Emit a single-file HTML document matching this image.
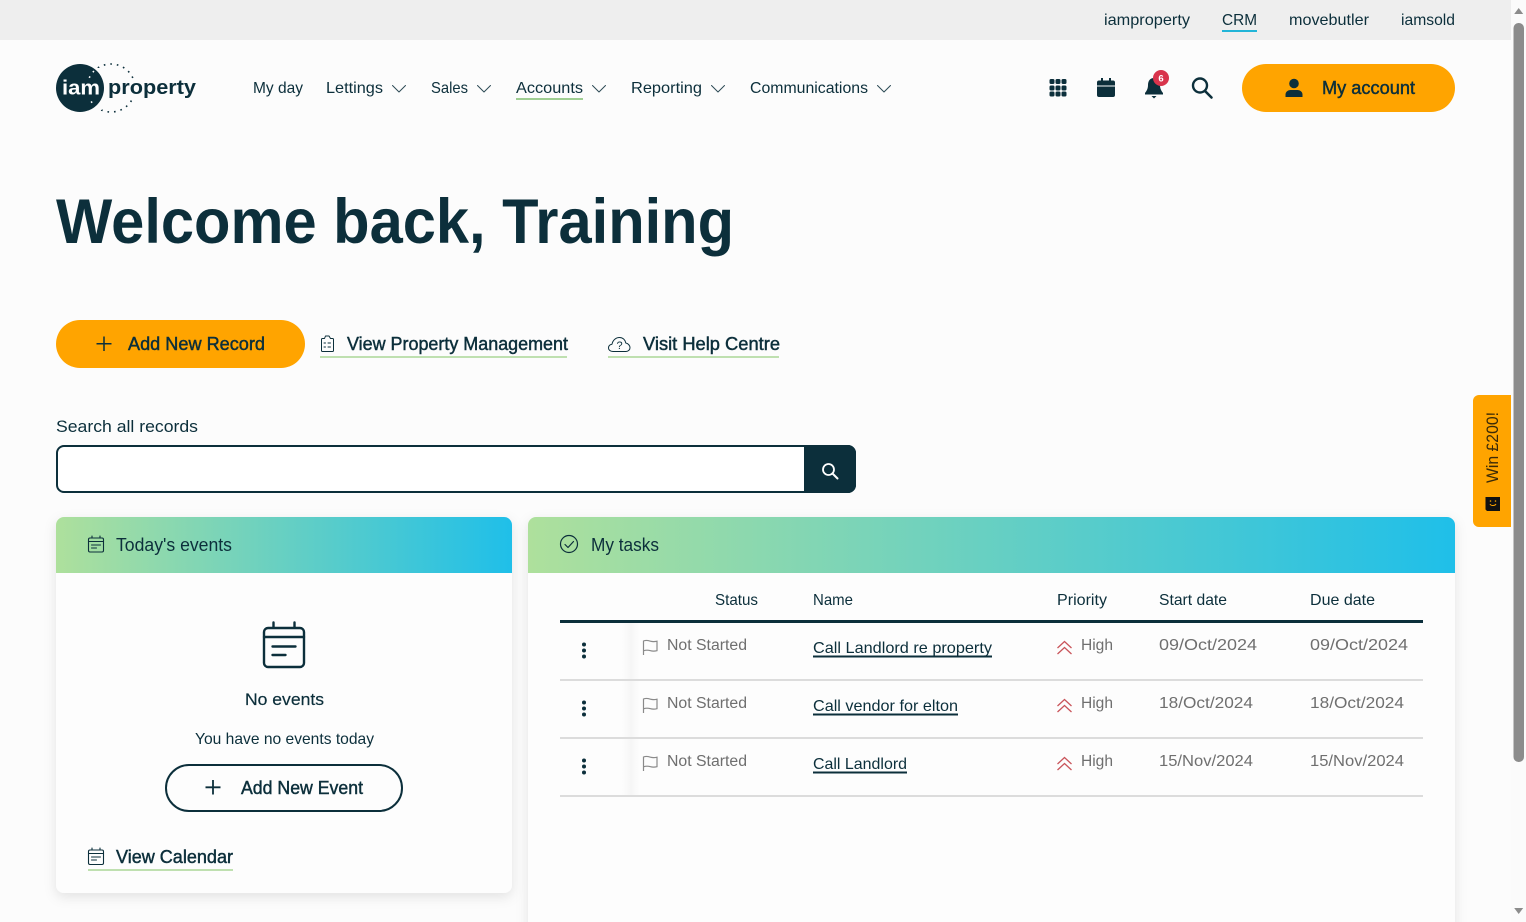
<!DOCTYPE html>
<html lang="en"><head><meta charset="utf-8"><title>iam property CRM</title>
<style>
html,body{margin:0;padding:0;width:1526px;height:922px;overflow:hidden;background:#fcfcfc}
svg{display:block;position:absolute;left:0;top:0}
text{font-family:"Liberation Sans",sans-serif;fill:#0c2f3b;font-size:16px}
.m{stroke:#0c2f3b;stroke-width:.45px}
.g{fill:#6f6f6f;font-size:15.5px}
.i{fill:none;stroke:#0c2f3b;stroke-width:1.3;stroke-linecap:round;stroke-linejoin:round}
.c{fill:none;stroke:#2c4a55;stroke-width:1;stroke-linecap:round;stroke-linejoin:round}
</style></head><body>
<svg width="1526" height="922" viewBox="0 0 1526 922" xmlns="http://www.w3.org/2000/svg">
<defs>
<linearGradient id="gr" x1="0" x2="1" y1="0" y2="0"><stop offset="0" stop-color="#aee09c"/><stop offset="1" stop-color="#1fbfe9"/></linearGradient>
<linearGradient id="fd" x1="0" x2="1" y1="0" y2="0"><stop offset="0" stop-color="#f7f7f7" stop-opacity="0"/><stop offset=".5" stop-color="#f6f6f6"/><stop offset="1" stop-color="#f7f7f7" stop-opacity="0"/></linearGradient>
<filter id="sh" x="-10%" y="-10%" width="120%" height="120%"><feDropShadow dx="0" dy="4" stdDeviation="6" flood-color="#000" flood-opacity=".1"/></filter>
<clipPath id="in"><path d="M85 68h17v12H85zM85 98h17v12H85z"/></clipPath>
<clipPath id="out"><path d="M104 60h40v20h-40zM104 97h40v20h-40zM92 60h14v8H92zM92 108h14v8H92z"/></clipPath>
</defs>
<!-- top bar -->
<rect x="0" y="0" width="1511" height="40" fill="#eeeeee"/>
<text x="1104" y="25" textLength="86" lengthAdjust="spacingAndGlyphs">iamproperty</text>
<text x="1222" y="25" textLength="35" lengthAdjust="spacingAndGlyphs">CRM</text>
<rect x="1222" y="30" width="35" height="2" fill="#22b5d8"/>
<text x="1289" y="25" textLength="80" lengthAdjust="spacingAndGlyphs">movebutler</text>
<text x="1401" y="25" textLength="54" lengthAdjust="spacingAndGlyphs">iamsold</text>
<!-- logo -->
<circle cx="111" cy="88" r="24" fill="none" stroke="#0c2f3b" stroke-width="1.600" stroke-dasharray="1.600 5" clip-path="url(#out)"/>
<circle cx="80" cy="88" r="24" fill="#0c2f3b"/>
<circle cx="111" cy="88" r="24" fill="none" stroke="#fff" stroke-width="1.600" stroke-dasharray="1.600 5" clip-path="url(#in)"/>
<text x="62" y="94.500" textLength="38" lengthAdjust="spacingAndGlyphs" font-weight="700" style="fill:#fff;font-size:20px">iam</text>
<text x="108" y="94" textLength="88" lengthAdjust="spacingAndGlyphs" font-weight="700" style="font-size:20px">property</text>
<!-- nav -->
<text x="253" y="93" textLength="50" lengthAdjust="spacingAndGlyphs">My day</text>
<text x="326" y="93" textLength="57" lengthAdjust="spacingAndGlyphs">Lettings</text>
<path class="c" d="M392.500 85.500l6.500 6.500 6.500-6.500"/>
<text x="431" y="93" textLength="37" lengthAdjust="spacingAndGlyphs">Sales</text>
<path class="c" d="M477.500 85.500l6.500 6.500 6.500-6.500"/>
<text x="516" y="93" textLength="67" lengthAdjust="spacingAndGlyphs">Accounts</text>
<rect x="516" y="98" width="67" height="2" fill="#9fce92"/>
<path class="c" d="M592.500 85.500l6.500 6.500 6.500-6.500"/>
<text x="631" y="93" textLength="71" lengthAdjust="spacingAndGlyphs">Reporting</text>
<path class="c" d="M711.500 85.500l6.500 6.500 6.500-6.500"/>
<text x="750" y="93" textLength="118" lengthAdjust="spacingAndGlyphs">Communications</text>
<path class="c" d="M877.500 85.500l6.500 6.500 6.500-6.500"/>
<!-- header icons -->
<g fill="#0c2f3b">
<rect x="1049.500" y="79" width="5" height="5" rx="1.500"/><rect x="1055.500" y="79" width="5" height="5" rx="1.500"/><rect x="1061.500" y="79" width="5" height="5" rx="1.500"/>
<rect x="1049.500" y="85.500" width="5" height="5" rx="1.500"/><rect x="1055.500" y="85.500" width="5" height="5" rx="1.500"/><rect x="1061.500" y="85.500" width="5" height="5" rx="1.500"/>
<rect x="1049.500" y="91.500" width="5" height="5" rx="1.500"/><rect x="1055.500" y="91.500" width="5" height="5" rx="1.500"/><rect x="1061.500" y="91.500" width="5" height="5" rx="1.500"/>
<path d="M1097 82.500a2 2 0 0 1 2-2h2v-2.500h2v2.500h6v-2.500h2v2.500h2a2 2 0 0 1 2 2v3h-18zM1097 86.500h18v8.500a2 2 0 0 1-2 2h-14a2 2 0 0 1-2-2z"/>
<path d="M1154 78c-4 0-6 3-6 7 0 4-1.500 6-3 8v1.500h18v-1.500c-1.500-2-3-4-3-8 0-4-2-7-6-7zM1151.500 96h5l-2.500 2.500z"/>
</g>
<circle cx="1161" cy="78" r="8" fill="#d8344c"/>
<text x="1161" y="81.500" text-anchor="middle" font-weight="700" style="fill:#fff;font-size:9.500px">6</text>
<circle cx="1200" cy="85.500" r="7" fill="none" stroke="#0c2f3b" stroke-width="2.400"/>
<path d="M1205 91l6.500 6.500" stroke="#0c2f3b" stroke-width="2.600" stroke-linecap="round"/>
<!-- my account -->
<rect x="1242" y="64" width="213" height="48" rx="24" fill="#ffa400"/>
<path d="M1289.200 83.500a4.800 4.800 0 1 1 9.600 0 4.800 4.800 0 0 1-9.600 0zM1285.500 97v-2.500c0-3 3-4.500 5-4.500h7c2 0 5 1.500 5 4.500v2.500z" fill="#0c2f3b"/>
<text x="1322" y="94" textLength="93" lengthAdjust="spacingAndGlyphs" class="m" style="font-size:18px">My account</text>
<!-- heading -->
<text x="56" y="243" textLength="678" lengthAdjust="spacingAndGlyphs" font-weight="700" style="font-size:63px">Welcome back, Training</text>
<!-- actions -->
<rect x="56" y="320" width="249" height="48" rx="24" fill="#ffa400"/>
<path d="M104 336.500v14.500M96.500 343.800h15" stroke="#0c2f3b" stroke-width="1.500" fill="none"/>
<text x="128" y="350" textLength="137" lengthAdjust="spacingAndGlyphs" class="m" style="font-size:18px">Add New Record</text>
<path class="i" style="stroke-width:1" d="M324.500 338.500h-2a1 1 0 0 0-1 1v11a1 1 0 0 0 1 1h10a1 1 0 0 0 1-1v-11a1 1 0 0 0-1-1h-2l-1.500-2.500h-3.500z"/>
<path class="i" style="stroke-width:1" d="M324 343h1.500M328 343h2.500M324 347h1.500M328 347h2.500"/>
<text x="347" y="350" textLength="221" lengthAdjust="spacingAndGlyphs" class="m" style="font-size:18px">View Property Management</text>
<rect x="320" y="356" width="247" height="2" fill="#bfe0b0"/>
<path class="i" style="stroke-width:1" d="M613 351.500c-3 0-4.500-1.700-4.500-3.500 0-2.200 1.500-3.500 3.500-3.800.8-4 3.800-6.700 7.500-6.700 3.300 0 5.700 2.300 6.300 5.500 2.200.4 4.200 2.300 4.200 4.800 0 2-1.800 3.700-4 3.700z"/>
<text x="619.500" y="349" text-anchor="middle" style="font-size:11px">?</text>
<text x="643" y="350" textLength="137" lengthAdjust="spacingAndGlyphs" class="m" style="font-size:18px">Visit Help Centre</text>
<rect x="608" y="356" width="171" height="2" fill="#bfe0b0"/>
<!-- search -->
<text x="56" y="432" textLength="142" lengthAdjust="spacingAndGlyphs" style="font-size:17px">Search all records</text>
<rect x="57" y="446" width="798" height="46" rx="7" fill="#fff" stroke="#0c2f3b" stroke-width="2"/>
<path d="M804 445h44a8 8 0 0 1 8 8v32a8 8 0 0 1-8 8h-44z" fill="#0c2f3b"/>
<circle cx="828.500" cy="469.500" r="5.500" fill="none" stroke="#fff" stroke-width="1.800"/>
<path d="M832.500 473.500l5 5" stroke="#fff" stroke-width="2" stroke-linecap="round"/>
<!-- left card -->
<rect x="56" y="517" width="456" height="376" rx="8" fill="#fdfdfd" filter="url(#sh)"/>
<path d="M64 517h440a8 8 0 0 1 8 8v48h-456v-48a8 8 0 0 1 8-8z" fill="url(#gr)"/>
<g class="i" style="stroke-width:1.100">
<rect x="88.500" y="538" width="15" height="14" rx="1.500"/><path d="M88.500 541.500h15M92 536v2M100 536v2M91.500 545h9M91.500 548h5"/>
</g>
<text x="116" y="551" textLength="116" lengthAdjust="spacingAndGlyphs" style="font-size:18px">Today's events</text>
<g class="i" style="stroke-width:2.400">
<rect x="264" y="628" width="40" height="39" rx="4"/><path d="M264 637h40M273.500 622.500v5M294.500 622.500v5M272.500 646.500h23M272.500 655h13"/>
</g>
<text x="245" y="705" textLength="79" lengthAdjust="spacingAndGlyphs" style="font-size:17px" stroke="#0c2f3b" stroke-width=".2">No events</text>
<text x="195" y="744" textLength="179" lengthAdjust="spacingAndGlyphs">You have no events today</text>
<rect x="166" y="765" width="236" height="46" rx="23" fill="none" stroke="#0c2f3b" stroke-width="2"/>
<path d="M213 780v14.500M205.500 787.300h15" stroke="#0c2f3b" stroke-width="1.800" fill="none"/>
<text x="241" y="794" textLength="122" lengthAdjust="spacingAndGlyphs" class="m" style="font-size:18px">Add New Event</text>
<g class="i" style="stroke-width:1.100">
<rect x="88.500" y="850" width="15" height="14.500" rx="1.500"/><path d="M88.500 853.500h15M92 848v2M100 848v2M91.500 857h9M91.500 860h5"/>
</g>
<text x="116" y="863" textLength="117" lengthAdjust="spacingAndGlyphs" class="m" style="font-size:18px">View Calendar</text>
<rect x="88" y="869" width="145" height="2" fill="#bfe0b0"/>
<!-- right card -->
<rect x="528" y="517" width="927" height="420" rx="8" fill="#fdfdfd" filter="url(#sh)"/>
<path d="M536 517h911a8 8 0 0 1 8 8v48h-927v-48a8 8 0 0 1 8-8z" fill="url(#gr)"/>
<circle cx="569" cy="544" r="8.500" class="i" style="stroke-width:1.200"/>
<path class="i" style="stroke-width:1.200" d="M565 544.500l3 3 5.500-6"/>
<text x="591" y="551" textLength="68" lengthAdjust="spacingAndGlyphs" style="font-size:18px">My tasks</text>
<!-- table -->
<text x="715" y="605" textLength="43" lengthAdjust="spacingAndGlyphs">Status</text>
<text x="813" y="605" textLength="40" lengthAdjust="spacingAndGlyphs">Name</text>
<text x="1057" y="605" textLength="50" lengthAdjust="spacingAndGlyphs">Priority</text>
<text x="1159" y="605" textLength="68" lengthAdjust="spacingAndGlyphs">Start date</text>
<text x="1310" y="605" textLength="65" lengthAdjust="spacingAndGlyphs">Due date</text>
<rect x="560" y="620" width="863" height="3" fill="#0c2f3b"/>
<rect x="622" y="623" width="18" height="172" fill="url(#fd)"/>
<rect x="560" y="679" width="863" height="2" fill="#dcdcdc"/>
<rect x="560" y="737" width="863" height="2" fill="#dcdcdc"/>
<rect x="560" y="795" width="863" height="2" fill="#dcdcdc"/>
<!-- row dots -->
<g fill="#0c2f3b">
<circle cx="584" cy="644.500" r="2"/><circle cx="584" cy="650.500" r="2"/><circle cx="584" cy="656.500" r="2"/>
<circle cx="584" cy="702.500" r="2"/><circle cx="584" cy="708.500" r="2"/><circle cx="584" cy="714.500" r="2"/>
<circle cx="584" cy="760.500" r="2"/><circle cx="584" cy="766.500" r="2"/><circle cx="584" cy="772.500" r="2"/>
</g>
<!-- flags -->
<g fill="none" stroke="#8a8a8a" stroke-width="1.200">
<path d="M643.500 655v-14c3-1.200 5-.4 7 .2 2 .6 4 .6 6.500 0v9.500c-2.500.6-4.500.6-6.500 0-2-.6-4-1-7 .1"/>
<path d="M643.500 713v-14c3-1.200 5-.4 7 .2 2 .6 4 .6 6.500 0v9.500c-2.500.6-4.500.6-6.500 0-2-.6-4-1-7 .1"/>
<path d="M643.500 771v-14c3-1.200 5-.4 7 .2 2 .6 4 .6 6.500 0v9.500c-2.500.6-4.500.6-6.500 0-2-.6-4-1-7 .1"/>
</g>
<text class="g" x="667" y="650" textLength="80" lengthAdjust="spacingAndGlyphs">Not Started</text>
<text class="g" x="667" y="708" textLength="80" lengthAdjust="spacingAndGlyphs">Not Started</text>
<text class="g" x="667" y="766" textLength="80" lengthAdjust="spacingAndGlyphs">Not Started</text>
<text x="813" y="653" textLength="179" lengthAdjust="spacingAndGlyphs">Call Landlord re property</text>
<rect x="813" y="655.500" width="179" height="2" fill="#0c2f3b"/>
<text x="813" y="711" textLength="145" lengthAdjust="spacingAndGlyphs">Call vendor for elton</text>
<rect x="813" y="713.500" width="145" height="2" fill="#0c2f3b"/>
<text x="813" y="769" textLength="94" lengthAdjust="spacingAndGlyphs">Call Landlord</text>
<rect x="813" y="771.500" width="94" height="2" fill="#0c2f3b"/>
<!-- chevrons -->
<g fill="none" stroke="#c9545a" stroke-width="1.300">
<path d="M1057.500 648l7-6.500 7 6.500M1057.500 654l7-6.500 7 6.500"/>
<path d="M1057.500 706l7-6.500 7 6.500M1057.500 712l7-6.500 7 6.500"/>
<path d="M1057.500 764l7-6.500 7 6.500M1057.500 770l7-6.500 7 6.500"/>
</g>
<text class="g" x="1081" y="650" textLength="32" lengthAdjust="spacingAndGlyphs">High</text>
<text class="g" x="1081" y="708" textLength="32" lengthAdjust="spacingAndGlyphs">High</text>
<text class="g" x="1081" y="766" textLength="32" lengthAdjust="spacingAndGlyphs">High</text>
<text class="g" x="1159" y="650" textLength="98" lengthAdjust="spacingAndGlyphs">09/Oct/2024</text>
<text class="g" x="1310" y="650" textLength="98" lengthAdjust="spacingAndGlyphs">09/Oct/2024</text>
<text class="g" x="1159" y="708" textLength="94" lengthAdjust="spacingAndGlyphs">18/Oct/2024</text>
<text class="g" x="1310" y="708" textLength="94" lengthAdjust="spacingAndGlyphs">18/Oct/2024</text>
<text class="g" x="1159" y="766" textLength="94" lengthAdjust="spacingAndGlyphs">15/Nov/2024</text>
<text class="g" x="1310" y="766" textLength="94" lengthAdjust="spacingAndGlyphs">15/Nov/2024</text>
<!-- win tab -->
<path d="M1511 395h-32a6 6 0 0 0-6 6v120a6 6 0 0 0 6 6h32z" fill="#ffa400"/>
<text transform="translate(1498 483) rotate(-90)" textLength="71" lengthAdjust="spacingAndGlyphs" style="fill:#3a2a08;font-size:17px">Win £200!</text>
<path d="M1485.500 497h14.500v14h-13l-1.500-1.500z" fill="#111"/>
<path d="M1490 504c.8 2 5 2 6 0" stroke="#ffa400" stroke-width="1" fill="none"/>
<circle cx="1490.500" cy="501" r=".8" fill="#ffa400"/><circle cx="1495.500" cy="501" r=".8" fill="#ffa400"/>
<!-- scrollbar -->
<rect x="1511" y="0" width="15" height="922" fill="#fbfbfb"/>
<rect x="1513.500" y="23" width="10.500" height="739" rx="5" fill="#8c8c8c"/>
<path d="M1518.700 8l4.500 6h-9z" fill="#8c8c8c"/>
<path d="M1518.700 914l4.500-6h-9z" fill="#8c8c8c"/>
</svg>
</body></html>
